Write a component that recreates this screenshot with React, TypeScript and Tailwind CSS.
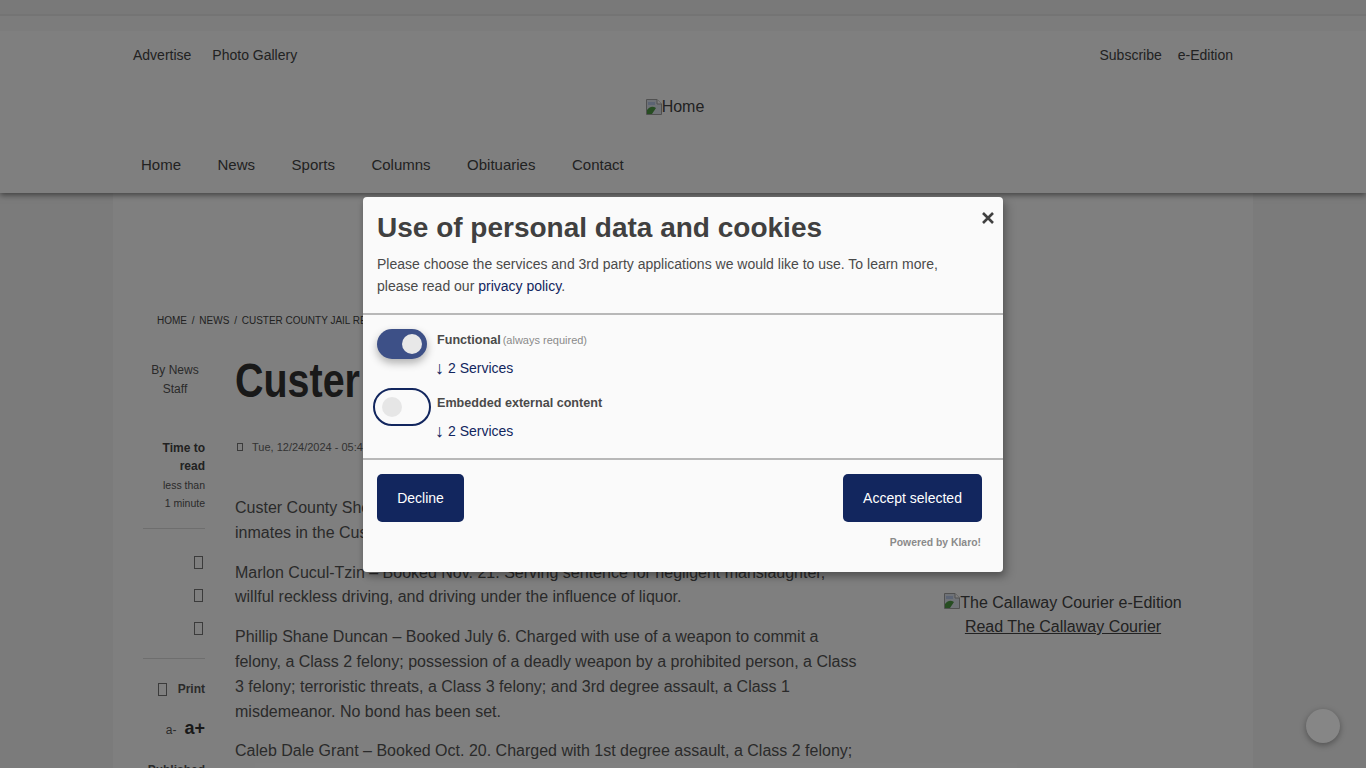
const sans = "font-['Liberation_Sans',Arial,sans-serif]";

function Tofu({ className }: { className: string }) {
  return <span className={`inline-block border border-[#777] ${className}`} />;
}

function BrokenImage() {
  return (
    <svg width="16" height="16" viewBox="0 0 16 16" className="inline-block align-[-1px]">
      <path d="M0.5 0.5H11L15.5 5V15.5H0.5Z" fill="#dfe4ee" stroke="#a0a0a0" />
      <path d="M11 0.5V5H15.5" fill="#fff" stroke="#a0a0a0" />
      <path d="M1 15V11C4 7 7 7 10 9L6 15Z" fill="#4f9a45" />
      <path d="M2 3H9V6H2Z" fill="#b9c9e8" />
    </svg>
  );
}

function Header() {
  return (
    <header className="relative z-10 bg-white shadow-[0_2px_6px_rgba(0,0,0,0.5)]">
      <div className="h-[16px] border-b-2 border-[#e8e8e8] bg-[#f3f3f3]" />
      <div className="h-[15px] bg-[#f8f8f8]" />
      <div className="mx-auto flex h-[48px] w-[1140px] items-center justify-between px-5 text-sm">
        <div className="flex gap-[21px]">
          <span>Advertise</span>
          <span>Photo Gallery</span>
        </div>
        <div className="flex gap-4">
          <span>Subscribe</span>
          <span>e-Edition</span>
        </div>
      </div>
      <div className="flex h-[54px] items-center justify-center pr-[16px] pt-[2px] text-base">
        <BrokenImage />
        <span>Home</span>
      </div>
      <nav className="mx-auto flex h-[60px] w-[1140px] items-center gap-[36.5px] px-7 pt-[4px] text-[15px]">
        <span>Home</span>
        <span>News</span>
        <span>Sports</span>
        <span>Columns</span>
        <span>Obituaries</span>
        <span>Contact</span>
      </nav>
    </header>
  );
}

function Rail() {
  return (
    <aside className="flex w-[62px] flex-col items-end text-right text-[12px] text-[#555]">
      <div className="w-[62px] pl-[2px] pt-[20px] text-center leading-[19px]">By News<br />Staff</div>
      <div className="mt-[40px] font-bold leading-[18px] text-[#444]">Time to<br />read</div>
      <div className="mt-[1px] text-[10.5px] leading-[18px]">less than<br />1 minute</div>
      <div className="mt-[16px] h-px w-full bg-[#ddd]" />
      <div className="mt-[27px] flex flex-col gap-[20px] pr-[2px]">
        <Tofu className="h-[13px] w-[9px]" />
        <Tofu className="h-[13px] w-[9px]" />
        <Tofu className="h-[13px] w-[9px]" />
      </div>
      <div className="mt-[23px] h-px w-full bg-[#ddd]" />
      <div className="mt-[21px] flex items-center gap-[11px] font-bold">
        <Tofu className="h-[13px] w-[9px]" />
        <span>Print</span>
      </div>
      <div className="mt-[17px] flex items-baseline gap-[8px]">
        <span className="text-[12px]">a-</span>
        <span className="text-[18px] font-bold text-[#333]">a+</span>
      </div>
      <div className="mt-[19px] font-bold">Published</div>
    </aside>
  );
}

function Article() {
  return (
    <article className="w-[625px] pt-[11px] text-base leading-[24.8px] text-[#555]">
      <h1 className="origin-left scale-x-[0.805] whitespace-nowrap text-[49px] font-bold leading-[56px] text-[#333]">
        Custer County Jail
      </h1>
      <div className="mt-[31px] flex items-center gap-[9px] text-[11px] leading-[16px] text-[#666]">
        <Tofu className="ml-[2px] h-[8px] w-[6px]" />
        <span>Tue, 12/24/2024 - 05:40</span>
      </div>
      <p className="mt-[41px]">
        Custer County Sheriff’s Office released the list of current<br />
        inmates in the Custer County Jail.
      </p>
      <p className="mt-[15px]">
        Marlon Cucul-Tzin – Booked Nov. 21. Serving sentence for negligent manslaughter,<br />
        willful reckless driving, and driving under the influence of liquor.
      </p>
      <p className="mt-[15px]">
        Phillip Shane Duncan – Booked July 6. Charged with use of a weapon to commit a<br />
        felony, a Class 2 felony; possession of a deadly weapon by a prohibited person, a Class<br />
        3 felony; terroristic threats, a Class 3 felony; and 3rd degree assault, a Class 1<br />
        misdemeanor. No bond has been set.
      </p>
      <p className="mt-[15px]">
        Caleb Dale Grant – Booked Oct. 20. Charged with 1st degree assault, a Class 2 felony;
      </p>
    </article>
  );
}

function Toggle({ on }: { on: boolean }) {
  if (on) {
    return (
      <div className="flex h-[30px] w-[50px] items-center justify-end rounded-full bg-[#3d5087] pr-[5px] shadow-[0_4px_8px_rgba(0,0,0,0.3)]">
        <span className="h-[20px] w-[20px] rounded-full bg-[#e8e8e8]" />
      </div>
    );
  }
  return (
    <div className="-mx-1 -my-1 flex h-[38px] w-[58px] items-center rounded-full border-2 border-[#12265e] bg-[#fafafa] pl-[7px]">
      <span className="h-[20px] w-[20px] rounded-full bg-[#e6e6e6]" />
    </div>
  );
}

function Purpose({ on, title, note }: { on: boolean; title: string; note?: string }) {
  return (
    <div className="flex h-[63px] gap-[10px]">
      <Toggle on={on} />
      <div>
        <div className="h-[22px] text-[12.6px] leading-[22px] font-bold text-[#4a4a4a]">
          {title}
          {note && <span className="ml-[2px] text-[11px] font-normal text-[#8a8a8a]">{note}</span>}
        </div>
        <div className="mt-[7px] flex h-[20px] items-center text-sm leading-[20px] text-[#12265e]">
          <span className="-ml-[2px] w-[13px] text-[18px] leading-[20px] font-light">↓</span>
          <span>2 Services</span>
        </div>
      </div>
    </div>
  );
}

function CookieModal() {
  return (
    <div className="absolute left-[363px] top-[197px] z-30 h-[375px] w-[640px] rounded-[4px] bg-[#fafafa] text-[#4a4a4a] shadow-[0_4px_6px_rgba(0,0,0,0.2),5px_5px_10px_rgba(0,0,0,0.19)]">
      <button className="absolute right-[7px] top-[13px] text-[#404040]" aria-label="Close">
        <svg width="16" height="16" viewBox="0 0 16 16">
          <path d="M3 3L13 13M13 3L3 13" stroke="currentColor" strokeWidth="2.6" />
        </svg>
      </button>
      <div className="h-[118px] border-b-2 border-[#b8b8b8] px-[14px] pt-[14px]">
        <h1 className="text-[28px] leading-[33px] font-bold text-[#404040]">Use of personal data and cookies</h1>
        <p className="mt-[9px] text-sm leading-[22px]">
          Please choose the services and 3rd party applications we would like to use. To learn more,<br />
          please read our <span className="text-[#12265e]">privacy policy</span>.
        </p>
      </div>
      <div className="h-[145px] border-b-2 border-[#b8b8b8] px-[14px] pt-[14px]">
        <Purpose on title="Functional" note="(always required)" />
        <Purpose on={false} title="Embedded external content" />
      </div>
      <div className="flex items-start justify-between pl-[14px] pr-[21px] pt-[14px]">
        <button className="h-[48px] w-[87px] rounded-[5px] bg-[#12265e] text-sm text-white">Decline</button>
        <button className="h-[48px] w-[139px] rounded-[5px] bg-[#12265e] text-sm text-white">Accept selected</button>
      </div>
      <div className="pr-[22px] pt-[15px] text-right text-[10.4px] leading-[12px] font-bold text-[#8a8a8a]">
        Powered by Klaro!
      </div>
    </div>
  );
}

export default function App() {
  return (
    <div className={`relative h-[768px] w-[1366px] overflow-hidden bg-[#f6f6f6] text-[#444] ${sans}`}>
      <Header />
      <main className="mx-auto h-[575px] w-[1140px] bg-white">
        <div className="pl-[44px] pt-[122px] text-[10px] leading-[12px] uppercase text-[#444]">
          Home <span className="mx-[2px]">/</span> News <span className="mx-[2px]">/</span> Custer County Jail Report
        </div>
        <div className="mt-[14px] flex">
          <div className="mx-[30px]"><Rail /></div>
          <Article />
          <div className="ml-[83px] mt-[250px] w-[240px] text-center text-base leading-[24px] text-[#444]">
            <div className="whitespace-nowrap"><BrokenImage />The Callaway Courier e-Edition</div>
            <div className="underline">Read The Callaway Courier</div>
          </div>
        </div>
      </main>
      <div className="absolute inset-0 z-20 bg-black/50" />
      <CookieModal />
      <div className="absolute left-[1306px] top-[709px] z-30 h-[34px] w-[34px] rounded-full bg-[#868686] shadow-[0_2px_6px_rgba(0,0,0,0.35)]" />
    </div>
  );
}
